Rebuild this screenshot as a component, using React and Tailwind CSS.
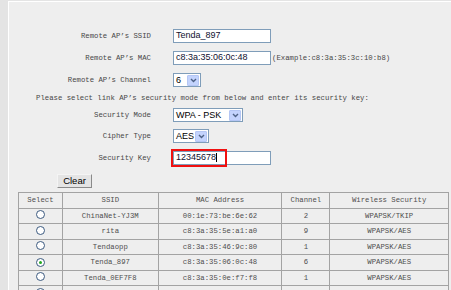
import React from 'react';

const mono = { fontFamily: '"Liberation Mono", "DejaVu Sans Mono", monospace' };
const sans = { fontFamily: '"Liberation Sans", Arial, sans-serif' };

const rows = [
  { ssid: 'ChinaNet-YJ3M', mac: '00:1e:73:be:6e:62', ch: '2', sec: 'WPAPSK/TKIP', h: 'h-[15px]' },
  { ssid: 'rita', mac: 'c8:3a:35:5e:a1:a0', ch: '9', sec: 'WPAPSK/AES', h: 'h-[16px]' },
  { ssid: 'Tendaopp', mac: 'c8:3a:35:46:9c:80', ch: '1', sec: 'WPAPSK/AES', h: 'h-[15px]' },
  { ssid: 'Tenda_897', mac: 'c8:3a:35:06:0c:48', ch: '6', sec: 'WPAPSK/AES', h: 'h-[16px]', on: true },
  { ssid: 'Tenda_0EF7F8', mac: 'c8:3a:35:0e:f7:f8', ch: '1', sec: 'WPAPSK/AES', h: 'h-[15px]' },
  { ssid: 'Tianyi-4Aa3', mac: 'c8:3a:35:2d:41:10', ch: '1', sec: 'NONE', h: 'h-[16px]' },
];

function Label({ children }) {
  return (
    <div className="w-[142px] text-right text-[7.3px] text-[#474747] pr-0" style={mono}>
      {children}
    </div>
  );
}

function TextBox({ value, width = 'w-[98px]' }) {
  return (
    <div
      className={`${width} h-[14px] border border-[#7f9db9] bg-white flex items-center pl-[2px] text-[9px] text-[#101030]`}
      style={sans}
    >
      {value}
    </div>
  );
}

function Select({ value, width }) {
  return (
    <div className={`${width} h-[14px] border border-[#7f9db9] bg-white flex items-center justify-between pl-[2px] pr-[1px]`}>
      <span className="text-[9px] text-black leading-none" style={sans}>{value}</span>
      <span className="w-[12px] h-[11px] bg-[#c3d3fd] border border-[#b4c6f4] rounded-[1px] flex items-center justify-center">
        <svg width="7" height="5" viewBox="0 0 7 5">
          <path d="M1 1 L3.5 3.5 L6 1" stroke="#4d6185" strokeWidth="1.4" fill="none" />
        </svg>
      </span>
    </div>
  );
}

function Radio({ on }) {
  return (
    <span className="w-[9px] h-[9px] rounded-full border border-[#3c5a80] bg-white inline-flex items-center justify-center">
      {on && <span className="w-[3px] h-[3px] rounded-full bg-[#22a822]" />}
    </span>
  );
}

export default function App() {
  return (
    <div className="w-[451px] h-[290px] overflow-hidden bg-[#e4e4e4] pt-[1px] pl-[8px]">
      <div className="h-[289px] bg-[#eeeeee] border-t border-l border-white">
        <div className="pt-[23px]">
          <div className="flex items-center h-[22px]">
            <Label>Remote AP’s SSID</Label>
            <div className="pl-[22px]"><TextBox value="Tenda_897" /></div>
          </div>
          <div className="flex items-center h-[22px]">
            <Label>Remote AP’s MAC</Label>
            <div className="pl-[22px] flex items-center">
              <TextBox value="c8:3a:35:06:0c:48" />
              <span className="ml-[1px] text-[7.3px] text-[#474747]" style={mono}>(Example:c8:3a:35:3c:10:b8)</span>
            </div>
          </div>
          <div className="flex items-center h-[22px]">
            <Label>Remote AP’s Channel</Label>
            <div className="pl-[22px]"><Select value="6" width="w-[28px]" /></div>
          </div>
          <div className="h-[14px] flex items-center pl-[27px] text-[7.3px] text-[#474747]" style={mono}>
            Please select link AP’s security mode from below and enter its security key:
          </div>
          <div className="flex items-center h-[20px]">
            <Label>Security Mode</Label>
            <div className="pl-[22px]"><Select value="WPA - PSK" width="w-[70px]" /></div>
          </div>
          <div className="flex items-center h-[22px]">
            <Label>Cipher Type</Label>
            <div className="pl-[22px]"><Select value="AES" width="w-[36px]" /></div>
          </div>
          <div className="flex items-center h-[22px]">
            <Label>Security Key</Label>
            <div className="pl-[22px]">
              <div className="relative">
                <TextBox value={<span>12345678<span className="inline-block w-[1px] h-[9px] bg-black align-middle" /></span>} />
                <div className="absolute left-[-2px] top-[-2px] w-[56px] h-[18px] border-2 border-[#f01010]" />
              </div>
            </div>
          </div>
          <div className="pl-[48px] pt-[5px]">
            <div
              className="w-[35px] h-[14px] border border-[#8a8a8a] border-t-[#f4f4f4] border-l-[#f4f4f4] bg-[#e4e4e4] flex items-center justify-center text-[9.5px] text-black"
              style={sans}
            >
              Clear
            </div>
          </div>
          <div className="pl-[9px] pt-[4px]">
            <table className="w-[431px] border-collapse text-[7.3px] text-[#4e4e4e]" style={mono}>
              <colgroup>
                <col className="w-[44px]" />
                <col className="w-[96px]" />
                <col className="w-[124px]" />
                <col className="w-[48px]" />
                <col className="w-[119px]" />
              </colgroup>
              <thead>
                <tr className="h-[16px]">
                  {['Select', 'SSID', 'MAC Address', 'Channel', 'Wireless Security'].map((t) => (
                    <th key={t} className="border border-[#a3a3a3] font-normal text-center p-0">{t}</th>
                  ))}
                </tr>
              </thead>
              <tbody>
                {rows.map((r) => (
                  <tr key={r.ssid} className={r.h}>
                    <td className="border border-[#a3a3a3] text-center p-0 leading-none">
                      <Radio on={r.on} />
                    </td>
                    <td className="border border-[#a3a3a3] text-center p-0">{r.ssid}</td>
                    <td className="border border-[#a3a3a3] text-center p-0">{r.mac}</td>
                    <td className="border border-[#a3a3a3] text-center p-0">{r.ch}</td>
                    <td className="border border-[#a3a3a3] text-center p-0">{r.sec}</td>
                  </tr>
                ))}
              </tbody>
            </table>
          </div>
        </div>
      </div>
    </div>
  );
}
